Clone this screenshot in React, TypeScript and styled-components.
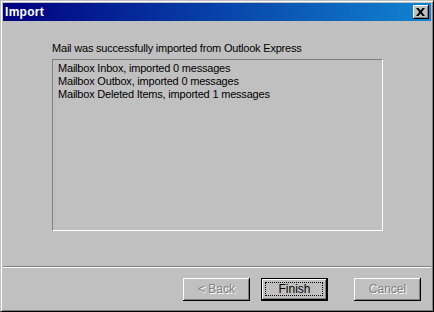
import React from 'react';
import styled, { createGlobalStyle } from 'styled-components';

const GlobalStyle = createGlobalStyle`
	html, body {
		margin: 0;
		padding: 0;
		background: #c0c0c0;
	}
	* {
		box-sizing: border-box;
	}
`;

const Window = styled.div`
	width: 434px;
	height: 312px;
	display: flex;
	flex-direction: column;
	padding: 2px;
	background: #c0c0c0;
	border: 1px solid;
	border-color: #c0c0c0 #000 #000 #c0c0c0;
	box-shadow: inset 1px 1px #fff, inset -1px -1px #808080;
	font-family: 'Liberation Sans', Arial, sans-serif;
	font-size: 11px;
	color: #000;
`;

const TitleBar = styled.div`
	height: 18px;
	display: flex;
	align-items: center;
	justify-content: space-between;
	padding: 0 2px 0 2px;
	background: linear-gradient(to right, #000080, #1084d0);
`;

const Title = styled.span`
	color: #fff;
	font-family: 'Liberation Sans', Arial, sans-serif;
	font-weight: bold;
	font-size: 12px;
	letter-spacing: 0.3px;
`;

const CloseBtn = styled.div`
	width: 16px;
	height: 14px;
	display: flex;
	align-items: center;
	justify-content: center;
	padding: 0 1px 1px 0;
	background: #c0c0c0;
	box-shadow: inset -1px -1px #000, inset 1px 1px #fff, inset -2px -2px #808080;
`;

const Body = styled.div`
	flex: 1;
	display: flex;
	flex-direction: column;
	padding: 21px 0 0 49px;
	letter-spacing: -0.2px;
`;

const Message = styled.div`
	line-height: 13px;
	margin-bottom: 4px;
`;

const ListBox = styled.div`
	width: 331px;
	height: 172px;
	padding: 2px 5px;
	border: 1px solid;
	border-color: #808080 #fff #fff #808080;
`;

const ListItem = styled.div`
	line-height: 13px;
	white-space: nowrap;
`;

const Separator = styled.div`
	height: 2px;
	border-top: 1px solid #808080;
	border-bottom: 1px solid #fff;
`;

const Footer = styled.div`
	height: 41px;
	display: flex;
	align-items: flex-start;
	padding: 10px 0 0 180px;
`;

const Button = styled.div<{ $disabled?: boolean; $default?: boolean; $gap?: number }>`
	position: relative;
	width: 67px;
	height: 23px;
	margin-left: ${(p) => p.$gap ?? 0}px;
	display: flex;
	align-items: center;
	justify-content: center;
	background: #c0c0c0;
	font-size: 12px;
	color: ${(p) => (p.$disabled ? '#808080' : '#000')};
	text-shadow: ${(p) => (p.$disabled ? '1px 1px #fff' : 'none')};
	border: ${(p) => (p.$default ? '1px solid #000' : 'none')};
	box-shadow: inset -1px -1px #000, inset 1px 1px #fff, inset -2px -2px #808080;
`;

const FocusRing = styled.div`
	position: absolute;
	left: 3px;
	top: 3px;
	right: 4px;
	bottom: 4px;
	border: 1px dotted #000;
`;

const ButtonLabel = styled.span`
	position: relative;
	top: -1px;
`;

function App() {
	const results = [
		'Mailbox Inbox, imported 0 messages',
		'Mailbox Outbox, imported 0 messages',
		'Mailbox Deleted Items, imported 1 messages',
	];

	return (
		<>
			<GlobalStyle />
			<Window>
				<TitleBar>
					<Title>Import</Title>
					<CloseBtn>
						<svg width="9" height="8" viewBox="0 0 9 8">
							<path d="M0 0h2.5l2 2.4 2-2.4h2.5l-3.2 4 3.2 4h-2.5l-2-2.4-2 2.4h-2.5l3.2-4z" fill="#000" />
						</svg>
					</CloseBtn>
				</TitleBar>
				<Body>
					<Message>Mail was successfully imported from Outlook Express</Message>
					<ListBox>
						{results.map((r) => (
							<ListItem key={r}>{r}</ListItem>
						))}
					</ListBox>
				</Body>
				<Separator />
				<Footer>
					<Button $disabled>
						<ButtonLabel>&lt; Back</ButtonLabel>
					</Button>
					<Button $default $gap={11}>
						<FocusRing />
						<ButtonLabel>Finish</ButtonLabel>
					</Button>
					<Button $disabled $gap={26}>
						<ButtonLabel>Cancel</ButtonLabel>
					</Button>
				</Footer>
			</Window>
		</>
	);
}

export default App;
